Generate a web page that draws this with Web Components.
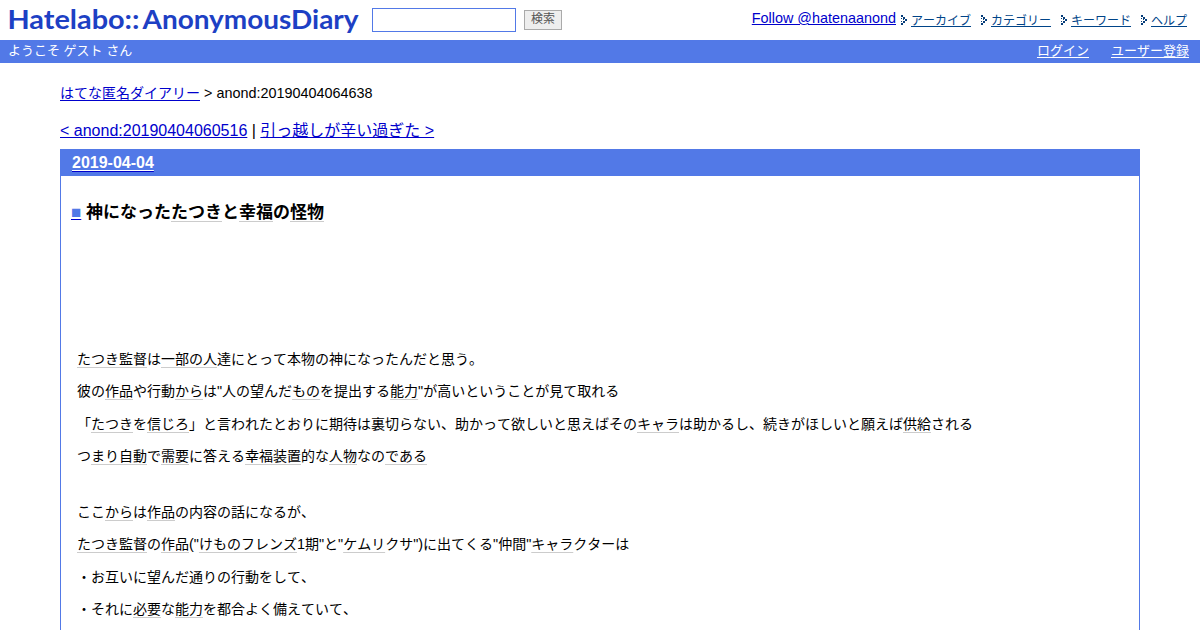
<!DOCTYPE html>
<html lang="ja">
<head>
<meta charset="utf-8">
<title>神になったたつきと幸福の怪物</title>
<style>
  body {
    margin: 0;
    height: 630px;
    overflow: hidden;
    background: #fff;
    color: #000;
    font-family: "Liberation Sans", "Noto Sans CJK JP", sans-serif;
  }
</style>
</head>
<body>
<anond-header>
  <site-logo></site-logo>
  <search-form label="検索"></search-form>
  <follow-link slot="nav">Follow @hatenaanond</follow-link>
  <guide-link slot="nav">アーカイブ</guide-link>
  <guide-link slot="nav">カテゴリー</guide-link>
  <guide-link slot="nav">キーワード</guide-link>
  <guide-link slot="nav">ヘルプ</guide-link>
</anond-header>
<user-bar>
  ようこそ ゲスト さん
  <bar-link slot="menu">ログイン</bar-link>
  <bar-link slot="menu">ユーザー登録</bar-link>
</user-bar>
<bread-crumb home="はてな匿名ダイアリー">anond:20190404064638</bread-crumb>
<entry-pager prev="&lt; anond:20190404060516" next="引っ越しが辛い過ぎた &gt;"></entry-pager>
<diary-day date="2019-04-04">
  <diary-title slot="title">神になった<key-word>たつき</key-word>と<key-word>幸福</key-word>の<key-word>怪物</key-word></diary-title>
  <diary-line><key-word>たつき</key-word><key-word>監督</key-word>は<key-word>一部の人</key-word>達にとって本物の神になったんだと思う。</diary-line>
  <diary-line>彼の<key-word>作品</key-word>や行動<key-word>から</key-word>は<la-tin>"</la-tin>人の望んだ<key-word>もの</key-word>を提出する<key-word>能力</key-word><la-tin>"</la-tin>が高いということが見て取れる</diary-line>
  <diary-line>「<key-word>たつき</key-word>を<key-word>信じろ</key-word>」と言われたとおりに期待は裏切らない、助かって欲しいと思えばその<key-word>キャラ</key-word>は助かるし、続きがほしいと願えば<key-word>供給</key-word>される</diary-line>
  <diary-line>つ<key-word>まり</key-word><key-word>自動</key-word>で<key-word>需要</key-word>に答える<key-word>幸福</key-word><key-word>装置</key-word>的な<key-word>人物</key-word>なの<key-word>である</key-word></diary-line>
  <diary-line gap>ここ<key-word>から</key-word>は<key-word>作品</key-word>の内容の話になるが、</diary-line>
  <diary-line><key-word>たつき</key-word><key-word>監督</key-word>の<key-word>作品</key-word><la-tin>("</la-tin><key-word>けものフレンズ</key-word><la-tin>1</la-tin>期<la-tin>"</la-tin>と<la-tin>"</la-tin><key-word>ケムリ</key-word>クサ<la-tin>")</la-tin>に出てくる<la-tin>"</la-tin>仲間<la-tin>"</la-tin><key-word>キャラ</key-word>クターは</diary-line>
  <diary-line>・お互いに望んだ通りの行動をして、</diary-line>
  <diary-line>・それに<key-word>必要</key-word>な<key-word>能力</key-word>を都合よく備えていて、</diary-line>
</diary-day>

<script>
  function define(name, html) {
    customElements.define(name, class extends HTMLElement {
      constructor() {
        super();
        const tmpl = document.createElement('template');
        // inline elements must not bring spaces of their own
        tmpl.innerHTML = html.trim();
        this.attachShadow({ mode: 'open' }).appendChild(tmpl.content.cloneNode(true));
        // copy attributes into the elements that ask for them
        this.shadowRoot.querySelectorAll('[data-attr]').forEach((el) => {
          el.textContent = this.getAttribute(el.dataset.attr);
        });
      }
    });
  }

  define('anond-header', `
    <style>
      :host { display: flex; height: 40px; box-sizing: border-box; padding-right: 13px; justify-content: space-between; }
      .left, .nav { display: flex; align-items: flex-start; }
    </style>
    <div class="left"><slot></slot></div>
    <div class="nav"><slot name="nav"></slot></div>
  `);

  define('site-logo', `
    <style>
      :host { display: block; width: 372px; height: 40px; }
      svg { display: block; }
      text { font: 700 27px Lato, sans-serif; fill: #1d40c4; }
    </style>
    <svg width="372" height="40">
      <text x="7.5" y="29" textLength="132" lengthAdjust="spacingAndGlyphs">Hatelabo::</text>
      <text x="142.5" y="29" textLength="216" lengthAdjust="spacingAndGlyphs">AnonymousDiary</text>
    </svg>
  `);

  define('search-form', `
    <style>
      :host { display: flex; gap: 8px; padding-top: 8px; }
      input { box-sizing: border-box; width: 144px; height: 24px; margin: 0; border: 1px solid #5279e7; padding: 2px; background: #fff; }
      button { box-sizing: border-box; width: 38px; height: 20px; margin: 2px 0 0; border: 1px solid #aaa; padding: 0 0 1px; background: #eee; color: #555; font: 12px/17px "Liberation Sans", "Noto Sans CJK JP", sans-serif; }
    </style>
    <input type="text"><button type="button" data-attr="label"></button>
  `);

  define('follow-link', `
    <style>
      :host { display: block; padding-top: 9px; margin-right: 5px; font-size: 14.4px; line-height: 18px; }
      a { color: #0000cc; text-decoration: underline; }
    </style>
    <a><slot></slot></a>
  `);

  define('guide-link', `
    <style>
      :host { display: flex; width: 70px; padding-top: 12px; font-size: 12px; line-height: 18px; font-kerning: none; }
      :host(:not(:last-of-type)) { margin-right: 10px; }
      :host(:last-of-type) { width: 46px; }
      svg { width: 6px; height: 10px; margin: 3px 4px 0 0; fill: #063d79; }
      a { color: #004488; text-decoration: underline; text-underline-offset: 1px; text-decoration-skip-ink: none; }
    </style>
    <svg viewBox="0 0 6 10" shape-rendering="crispEdges"><path d="M0 0h2v2h-2zM2 2h2v2h-2zM4 4h2v2h-2zM2 6h2v2h-2zM0 8h2v2h-2zM0 3h1v1h-1zM2 4h1v1h-1zM0 6h1v1h-1z"/></svg><a><slot></slot></a>
  `);

  define('user-bar', `
    <style>
      :host { display: flex; justify-content: space-between; height: 23px; box-sizing: border-box; padding: 0 11px 0 8px; background: #5279e7; color: #fff; font-size: 13px; line-height: 22px; font-kerning: none; }
      .menu { display: flex; gap: 22px; }
    </style>
    <span><slot></slot></span>
    <div class="menu"><slot name="menu"></slot></div>
  `);

  define('bar-link', `
    <style>
      :host { display: block; color: #fff; }
      a { text-decoration: underline; text-underline-offset: 2px; }
    </style>
    <a><slot></slot></a>
  `);

  define('bread-crumb', `
    <style>
      :host { display: block; margin: 20px 60px 0; height: 20px; font-size: 14.4px; line-height: 20px; }
      a { color: #0000cc; font-size: 14px; text-decoration: underline; text-underline-offset: 2px; }
    </style>
    <a data-attr="home"></a> &gt; <slot></slot>
  `);

  define('entry-pager', `
    <style>
      :host { display: block; margin: 18px 60px 0; height: 28px; font-size: 16px; line-height: 20px; }
      a { color: #0000cc; text-decoration: underline; }
    </style>
    <a data-attr="prev"></a> | <a data-attr="next"></a>
  `);

  define('diary-day', `
    <style>
      :host { display: block; margin: 0 60px; border: 1px solid #5279e7; }
      h2 { margin: 0; padding-left: 11px; height: 26px; background: #5279e7; color: #fff; font-size: 16px; line-height: 25px; }
      h2 a { text-decoration: underline; text-decoration-color: #0000cc; text-decoration-thickness: 1px; text-underline-offset: 3px; }
      h2 span { text-decoration: underline; text-underline-offset: 2px; text-decoration-thickness: 1px; }
      .body { padding: 0 16px; font-size: 14px; line-height: 18px; font-kerning: none; }
    </style>
    <h2><a><span data-attr="date"></span></a></h2>
    <slot name="title"></slot>
    <div class="body"><slot></slot></div>
  `);

  define('diary-title', `
    <style>
      :host { display: block; margin: 25px 10px 124.8px; height: 24px; font-size: 17px; font-weight: bold; line-height: 24px; }
      a { color: #5279e7; text-decoration: underline; text-decoration-color: #0000cc; text-decoration-thickness: 1px; }
    </style>
    <a>■</a> <slot></slot>
  `);

  define('diary-line', `
    <style>
      :host { display: block; height: 18px; margin-bottom: 14.4px; white-space: nowrap; }
      :host([gap]) { margin-top: 37.9px; }
    </style>
    <slot></slot>
  `);

  // auto-linked keyword with a faint underline
  define('key-word', `
    <style>
      a { text-decoration: underline; text-decoration-color: #ccc; text-decoration-thickness: 1px; text-underline-offset: 3px; text-decoration-skip-ink: none; }
    </style><a><slot></slot></a>
  `);

  define('la-tin', `
    <style>:host { font-size: 14.4px; }</style><slot></slot>
  `);
</script>
</body>
</html>
